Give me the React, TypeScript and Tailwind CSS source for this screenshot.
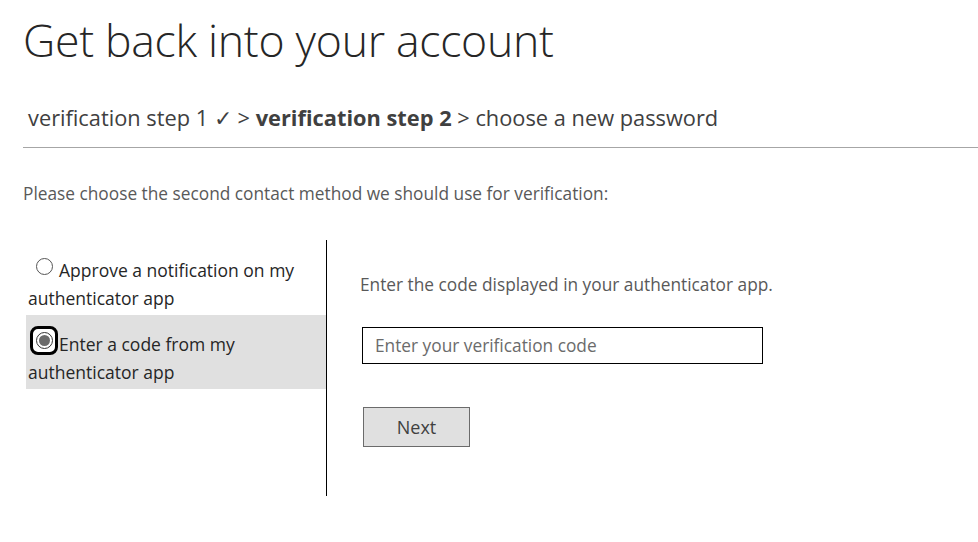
import React from "react";

export default function App() {
  const font = { fontFamily: '"Open Sans", "Noto Sans", sans-serif' };
  return (
    <div className="w-[978px] h-[542px] bg-white overflow-hidden text-[#333]" style={font}>
      <div className="pl-[23px] pt-[12px]">
        <h1 className="text-[44.6px] leading-[56px] font-light text-[#262626] tracking-[-0.3px]">Get back into your account</h1>
        <div className="mt-[35px] pl-[5px] text-[21.8px] leading-[30px] text-[#404040]">
          verification step 1 ✓ &gt; <span className="font-bold">verification step 2</span> &gt; choose a new password
        </div>
        <div className="mt-[14px] h-px bg-[#a6a6a6]" />
        <p className="mt-[33px] text-[17.3px] leading-[26px] text-[#595959]">
          Please choose the second contact method we should use for verification:
        </p>
        <div className="mt-[33px] flex">
          <div className="ml-[3px] w-[301px] h-[256px] border-r border-black pt-[16px]">
            <div className="pl-[2px] pr-2 text-[17.5px] leading-[28px] text-[#262626]">
              <span className="relative -top-[3px] inline-block align-middle ml-[8px] mr-[6px] mb-[5px] w-[17px] h-[17px] rounded-full border border-[#555] bg-white" />
              Approve a notification on my authenticator app
            </div>
            <div className="mt-[3px] bg-[#e0e0e0] h-[74px] pt-[15px] pl-[2px] text-[17.5px] leading-[28px] text-[#262626]">
              <div className="relative">
                <span className="absolute left-[2px] -top-[4px] w-[28px] h-[29px] rounded-[8px] border-[3px] border-black bg-white flex items-center justify-center">
                  <span className="w-[17px] h-[17px] rounded-full border border-[#333] bg-white flex items-center justify-center">
                    <span className="w-[11px] h-[11px] rounded-full bg-[#6b6b6b]" />
                  </span>
                </span>
                <span className="pl-[31px]">Enter a code from my</span>
                <br />
                authenticator app
              </div>
            </div>
          </div>
          <div className="pl-[33px] pt-[32px]">
            <p className="text-[17.3px] leading-[26px] text-[#595959]">Enter the code displayed in your authenticator app.</p>
            <div className="mt-[29px] ml-[2px] w-[401px] h-[37px] border border-black flex items-center pl-[12px] text-[17.3px] text-[#6b6b6b]">
              Enter your verification code
            </div>
            <button className="mt-[43px] ml-[3px] w-[107px] h-[40px] bg-[#e0e0e0] border border-[#6b6b6b] text-[18px] text-[#404040]">
              Next
            </button>
          </div>
        </div>
      </div>
    </div>
  );
}
